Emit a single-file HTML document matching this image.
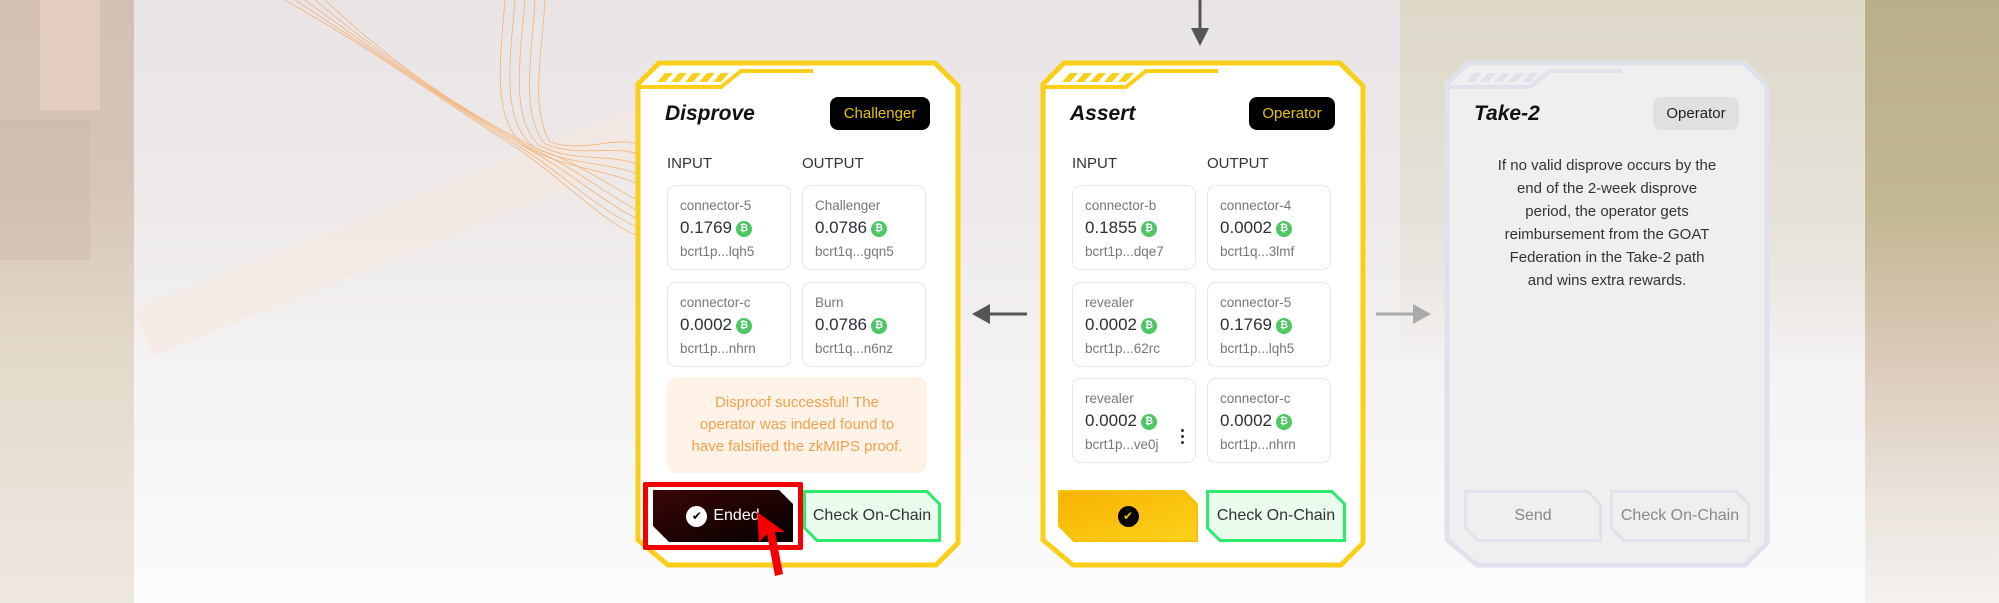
<!DOCTYPE html>
<html><head><meta charset="utf-8">
<style>
*{margin:0;padding:0;box-sizing:border-box}
body{width:1999px;height:603px;overflow:hidden;position:relative;font-family:"Liberation Sans","DejaVu Sans",sans-serif;background:#f6f3f4}
.abs{position:absolute}
.card{position:absolute;top:60px;width:326px;height:508px}
.card svg.frame{position:absolute;left:0;top:0}
.title{position:absolute;left:30px;top:42px;font-size:21px;font-weight:bold;font-style:italic;color:#111}
.badge{position:absolute;top:37px;height:33px;border-radius:8px;background:#000;color:#e8c400;font-size:15px;line-height:33px;text-align:center}
.lbl{position:absolute;top:95px;font-size:15px;color:#333}
.box{position:absolute;width:124px;height:85px;border:1.5px solid #e3e7ef;border-radius:9px;background:#fff;padding-left:12px}
.box .n{position:absolute;left:12px;top:12px;font-size:13.5px;color:#777}
.box .v{position:absolute;left:12px;top:32px;font-size:17px;color:#2b2f3a}
.box .a{position:absolute;left:12px;top:58px;font-size:13.5px;color:#777}
.btc{display:inline-block;width:16px;height:16px;border-radius:50%;background:#4cc763;color:#fff;font-size:10px;line-height:16px;text-align:center;font-weight:bold;vertical-align:2px;margin-left:4px}
.btn{position:absolute;top:430px;height:52px}
.btn svg{position:absolute;left:0;top:0}
.btn span{position:absolute;left:0;right:0;top:0;height:52px;display:flex;align-items:center;justify-content:center;font-size:16px}
.ic{display:inline-flex;align-items:center;justify-content:center;width:21px;height:21px;border-radius:50%;font-size:12px;font-weight:bold}
</style></head><body>
<!-- background -->
<div class="abs" style="left:0;top:0;width:134px;height:603px;background:linear-gradient(180deg,#d4c0b4 0%,#d6c6b6 30%,#e4dacb 60%,#eee8e2 100%)"></div>
<div class="abs" style="left:40px;top:0;width:60px;height:110px;background:#ecd3c8;opacity:.6"></div>
<div class="abs" style="left:0;top:120px;width:90px;height:140px;background:#c9b3ad;opacity:.35"></div>
<div class="abs" style="left:134px;top:0;width:1731px;height:603px;background:linear-gradient(180deg,#e9e4e6 0%,#eeeaea 35%,#f5f3f3 65%,#fcfcfc 100%)"></div>
<div class="abs" style="left:1865px;top:0;width:134px;height:603px;background:linear-gradient(180deg,#b9af89 0%,#c3b894 35%,#dbcbba 60%,#ece5df 85%,#f4f1ef 100%)"></div>
<div class="abs" style="left:1400px;top:0;width:465px;height:360px;background:linear-gradient(180deg,#ddd8c8 0%,#e4e0d6 50%,rgba(240,237,236,0) 100%)"></div>
<div class="abs" style="left:134px;top:310px;width:600px;height:50px;background:#f7e8de;opacity:.5;transform:rotate(-22deg);transform-origin:0 0"></div>
<svg class="abs" style="left:270px;top:0" width="380" height="250" viewBox="0 0 380 250">
<g fill="none" stroke="#f5a55a" stroke-width="0.8" opacity="0.8">
<path d="M15 0 C120 60 170 100 250 150 C300 185 340 230 380 240"/>
<path d="M25 0 C125 65 180 105 255 150 C300 180 340 220 380 232"/>
<path d="M35 0 C130 70 190 110 260 150 C305 175 345 212 380 224"/>
<path d="M45 0 C135 75 200 115 265 150 C310 170 350 205 380 216"/>
<path d="M55 0 C140 80 210 120 270 150 C315 165 352 195 380 206"/>
<path d="M235 0 C230 60 220 130 262 150 C300 170 345 170 380 190"/>
<path d="M245 0 C240 60 230 125 266 148 C305 168 345 160 380 180"/>
<path d="M255 0 C250 60 240 120 270 146 C310 165 345 150 380 170"/>
<path d="M265 0 C262 55 250 115 275 144 C315 160 350 140 380 160"/>
<path d="M275 0 C272 55 260 110 280 142 C320 155 352 130 380 150"/>
</g></svg>

<!-- arrows -->
<svg class="abs" style="left:1190px;top:0" width="20" height="48"><line x1="10" y1="0" x2="10" y2="32" stroke="#555" stroke-width="3"/><polygon points="1,28 19,28 10,46" fill="#555"/></svg>
<svg class="abs" style="left:972px;top:302px" width="56" height="24"><line x1="14" y1="12" x2="55" y2="12" stroke="#555" stroke-width="3"/><polygon points="0,12 18,2 18,22" fill="#555"/></svg>
<svg class="abs" style="left:1376px;top:302px" width="56" height="24"><line x1="0" y1="12" x2="40" y2="12" stroke="#aaa" stroke-width="3"/><polygon points="55,12 37,2 37,22" fill="#aaa"/></svg>

<!-- CARD 1 -->
<div class="card" style="left:635px">
<svg class="frame" width="326" height="508"><polygon points="3,24 24,3 300,3 323,26 323,483 301,505 33,505 3,480" fill="#fff" stroke="#f9cf1a" stroke-width="5"/>
<polyline points="3,27 86,27 106,11 178,11" fill="none" stroke="#f9cf1a" stroke-width="4"/>
<g fill="#f9cf1a"><polygon points="22,22 30,13 38,13 30,22"/><polygon points="36,22 44,13 52,13 44,22"/><polygon points="50,22 58,13 66,13 58,22"/><polygon points="64,22 72,13 80,13 72,22"/><polygon points="78,22 86,13 94,13 86,22"/></g></svg>
<div class="title">Disprove</div>
<div class="badge" style="left:195px;width:100px">Challenger</div>
<div class="lbl" style="left:32px">INPUT</div><div class="lbl" style="left:167px">OUTPUT</div>
<div class="box" style="left:32px;top:125px"><div class="n">connector-5</div><div class="v">0.1769<span class="btc">₿</span></div><div class="a">bcrt1p...lqh5</div></div>
<div class="box" style="left:167px;top:125px"><div class="n">Challenger</div><div class="v">0.0786<span class="btc">₿</span></div><div class="a">bcrt1q...gqn5</div></div>
<div class="box" style="left:32px;top:222px"><div class="n">connector-c</div><div class="v">0.0002<span class="btc">₿</span></div><div class="a">bcrt1p...nhrn</div></div>
<div class="box" style="left:167px;top:222px"><div class="n">Burn</div><div class="v">0.0786<span class="btc">₿</span></div><div class="a">bcrt1q...n6nz</div></div>
<div class="abs" style="left:32px;top:317px;width:260px;height:96px;background:#fff3e7;border-radius:10px;color:#f5a04f;font-size:15px;line-height:22px;text-align:center;padding-top:15px">Disproof successful! The<br>operator was indeed found to<br>have falsified the zkMIPS proof.</div>
<div class="btn" style="left:18px;width:140px"><svg width="140" height="52"><defs><linearGradient id="dg" x1="0" y1="0" x2="1" y2="1"><stop offset="0" stop-color="#3a0606"/><stop offset="1" stop-color="#050000"/></linearGradient></defs><polygon points="0,0 126,0 140,14 140,52 16,52 0,36" fill="url(#dg)"/></svg>
<span style="color:#fff"><b class="ic" style="background:#fff;color:#000;margin-right:6px">✔</b>Ended</span></div>
<div class="btn" style="left:168px;width:138px"><svg width="138" height="52"><polygon points="1.5,1.5 124,1.5 136.5,14 136.5,50.5 14,50.5 1.5,38" fill="#eafcee" stroke="#2dea6b" stroke-width="3"/></svg><span style="color:#333">Check On-Chain</span></div>
<div class="abs" style="left:8px;top:422px;width:160px;height:68px;border:5px solid #f50000;border-radius:2px"></div>
<svg class="abs" style="left:118px;top:450px" width="50" height="70"><polygon points="4,2 32,22 22,22 30,64 22,66 14,24 6,32" fill="#f50000"/></svg>
</div>

<!-- CARD 2 -->
<div class="card" style="left:1040px">
<svg class="frame" width="326" height="508"><polygon points="3,24 24,3 300,3 323,26 323,483 301,505 33,505 3,480" fill="#fff" stroke="#f9cf1a" stroke-width="5"/>
<polyline points="3,27 86,27 106,11 178,11" fill="none" stroke="#f9cf1a" stroke-width="4"/>
<g fill="#f9cf1a"><polygon points="22,22 30,13 38,13 30,22"/><polygon points="36,22 44,13 52,13 44,22"/><polygon points="50,22 58,13 66,13 58,22"/><polygon points="64,22 72,13 80,13 72,22"/><polygon points="78,22 86,13 94,13 86,22"/></g></svg>
<div class="title">Assert</div>
<div class="badge" style="left:209px;width:86px">Operator</div>
<div class="lbl" style="left:32px">INPUT</div><div class="lbl" style="left:167px">OUTPUT</div>
<div class="box" style="left:32px;top:125px"><div class="n">connector-b</div><div class="v">0.1855<span class="btc">₿</span></div><div class="a">bcrt1p...dqe7</div></div>
<div class="box" style="left:167px;top:125px"><div class="n">connector-4</div><div class="v">0.0002<span class="btc">₿</span></div><div class="a">bcrt1q...3lmf</div></div>
<div class="box" style="left:32px;top:222px"><div class="n">revealer</div><div class="v">0.0002<span class="btc">₿</span></div><div class="a">bcrt1p...62rc</div></div>
<div class="box" style="left:167px;top:222px"><div class="n">connector-5</div><div class="v">0.1769<span class="btc">₿</span></div><div class="a">bcrt1p...lqh5</div></div>
<div class="box" style="left:32px;top:318px"><div class="n">revealer</div><div class="v">0.0002<span class="btc">₿</span></div><div class="a">bcrt1p...ve0j</div><div class="abs" style="left:108px;top:50px;width:3px;font-size:0"><i style="display:block;width:3px;height:3px;background:#333;border-radius:50%;margin-bottom:3px"></i><i style="display:block;width:3px;height:3px;background:#333;border-radius:50%;margin-bottom:3px"></i><i style="display:block;width:3px;height:3px;background:#333;border-radius:50%"></i></div></div>
<div class="box" style="left:167px;top:318px"><div class="n">connector-c</div><div class="v">0.0002<span class="btc">₿</span></div><div class="a">bcrt1p...nhrn</div></div>
<div class="btn" style="left:18px;width:140px"><svg width="140" height="52"><defs><linearGradient id="yg" x1="0" y1="0" x2="1" y2="1"><stop offset="0" stop-color="#f8b200"/><stop offset="1" stop-color="#fbd21c"/></linearGradient></defs><polygon points="1,1 126,1 139,14 139,51 16,51 1,36" fill="url(#yg)" stroke="#f7c20a" stroke-width="2"/></svg>
<span><b class="ic" style="background:#000;color:#f8c000">✔</b></span></div>
<div class="btn" style="left:166px;width:140px"><svg width="140" height="52"><polygon points="1.5,1.5 126,1.5 138.5,14 138.5,50.5 14,50.5 1.5,38" fill="#eafcee" stroke="#2dea6b" stroke-width="3"/></svg><span style="color:#333">Check On-Chain</span></div>
</div>

<!-- CARD 3 -->
<div class="card" style="left:1444px">
<svg class="frame" width="326" height="508"><polygon points="3,24 24,3 300,3 323,26 323,483 301,505 33,505 3,480" fill="#efefef" stroke="#dfe2ec" stroke-width="5"/>
<polyline points="3,27 86,27 106,11 178,11" fill="none" stroke="#dfe2ec" stroke-width="4"/>
<g fill="#dfe2ec"><polygon points="22,22 30,13 38,13 30,22"/><polygon points="36,22 44,13 52,13 44,22"/><polygon points="50,22 58,13 66,13 58,22"/><polygon points="64,22 72,13 80,13 72,22"/><polygon points="78,22 86,13 94,13 86,22"/></g></svg>
<div class="title">Take-2</div>
<div class="badge" style="left:209px;width:86px;background:#e0e0e0;color:#222">Operator</div>
<div class="abs" style="left:20px;width:286px;top:94px;text-align:center;font-size:15px;line-height:23px;color:#333">If no valid disprove occurs by the<br>end of the 2-week disprove<br>period, the operator gets<br>reimbursement from the GOAT<br>Federation in the Take-2 path<br>and wins extra rewards.</div>
<div class="btn" style="left:20px;width:138px"><svg width="138" height="52"><polygon points="1.5,1.5 124,1.5 136.5,14 136.5,50.5 14,50.5 1.5,38" fill="#efefef" stroke="#dfe2ec" stroke-width="3"/></svg><span style="color:#888">Send</span></div>
<div class="btn" style="left:166px;width:140px"><svg width="140" height="52"><polygon points="1.5,1.5 126,1.5 138.5,14 138.5,50.5 14,50.5 1.5,38" fill="#efefef" stroke="#dfe2ec" stroke-width="3"/></svg><span style="color:#888">Check On-Chain</span></div>
</div>
</body></html>
